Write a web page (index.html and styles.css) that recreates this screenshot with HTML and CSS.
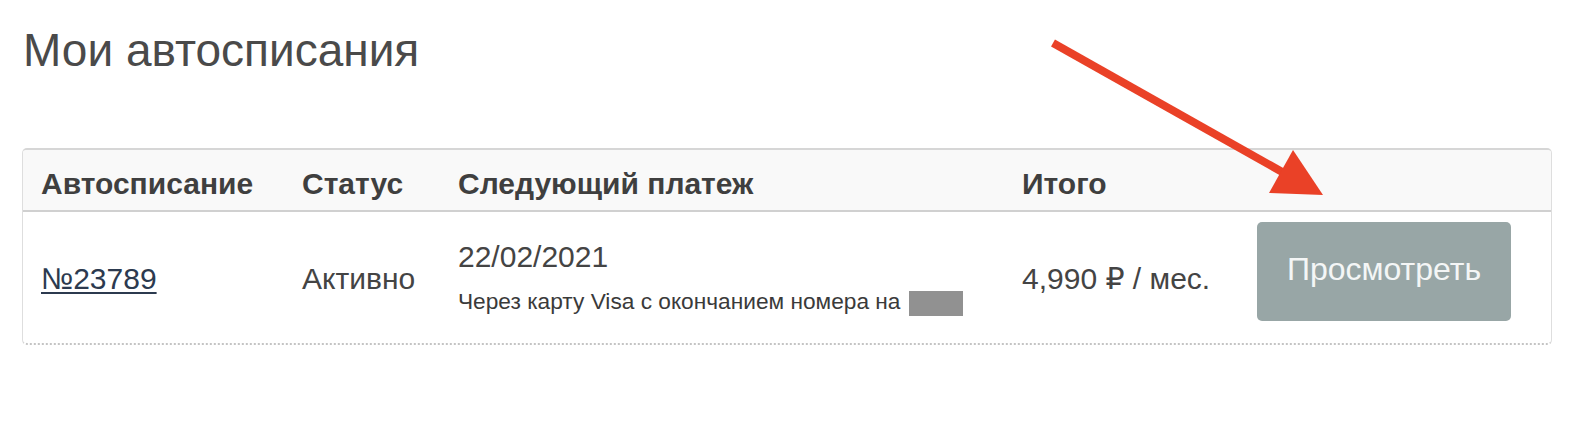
FILE: index.html
```html
<!DOCTYPE html>
<html lang="ru">
<head>
<meta charset="utf-8">
<title>Мои автосписания</title>
<link rel="stylesheet" href="styles.css">
</head>
<body>
<div class="page">
  <h1 class="title">Мои автосписания</h1>
  <div class="table">
    <div class="th">Автосписание</div>
    <div class="th">Статус</div>
    <div class="th">Следующий платеж</div>
    <div class="th">Итого</div>
    <div class="th"></div>

    <div class="td"><a class="link" href="#">№23789</a></div>
    <div class="td">Активно</div>
    <div class="td td-stack">
      <div class="date">22/02/2021</div>
      <div class="note">Через карту Visa с окончанием номера на <span class="mask"></span></div>
    </div>
    <div class="td">4,990 ₽ / мес.</div>
    <div class="td td-btn"><button class="btn">Просмотреть</button></div>
  </div>
  <svg class="arrow" width="1582" height="428" viewBox="0 0 1582 428" xmlns="http://www.w3.org/2000/svg">
    <line x1="1053" y1="43" x2="1284" y2="173" stroke="#ea4127" stroke-width="8"/>
    <polygon points="1293,150 1269,193 1323,195" fill="#ea4127"/>
  </svg>
</div>
</body>
</html>
```
FILE: styles.css
```css
* { box-sizing: border-box; }
html, body { margin: 0; padding: 0; background: #fff; }
body {
  font-family: "Liberation Sans", Arial, "DejaVu Sans", sans-serif;
  color: #444;
}
.page {
  position: relative;
  width: 1582px;
  height: 428px;
  padding: 27px 30px 0 22px;
}
.title {
  margin: 0 0 75px 1px;
  font-size: 46px;
  line-height: 46px;
  font-weight: normal;
  color: #4a4a4a;
}
.table {
  width: 1530px;
  display: grid;
  grid-template-columns: 261px 156px 564px 235px 1fr;
  border: 1px solid #dedede;
  border-top: 2px solid #d6d6d6;
  border-bottom: 2px dotted #c4c4c4;
  border-radius: 5px;
  overflow: hidden;
}
.th {
  background: #f9f9f9;
  height: 62px;
  padding: 8px 0 0 18px;
  line-height: 52px;
  font-size: 30px;
  font-weight: bold;
  color: #3f3f3f;
  border-bottom: 2px solid #d0d0d0;
  white-space: nowrap;
}
.td {
  height: 131px;
  padding: 2px 0 0 18px;
  display: flex;
  align-items: center;
  font-size: 30px;
  color: #444;
  white-space: nowrap;
}
.td-stack {
  flex-direction: column;
  align-items: flex-start;
  justify-content: center;
  padding-top: 0;
}
.date {
  font-size: 30px;
  line-height: 36px;
  margin-bottom: 12px;
}
.note {
  font-size: 22.7px;
  line-height: 28px;
  color: #3a3a3a;
}
.mask {
  display: inline-block;
  width: 54px;
  height: 25px;
  background: #919191;
  vertical-align: -7px;
  margin-left: 2px;
}
.link {
  color: #2c3a4f;
  text-decoration: underline;
  text-decoration-thickness: 2px;
  text-underline-offset: 3px;
}
.td-btn {
  align-items: flex-start;
  padding-top: 10px;
}
.btn {
  width: 254px;
  height: 99px;
  border: none;
  border-radius: 5px;
  background: #98a6a6;
  color: #f4f6f6;
  font-family: "Liberation Sans", Arial, sans-serif;
  font-size: 32px;
  padding: 0 0 4px;
}
.arrow {
  position: absolute;
  top: 0;
  left: 0;
  pointer-events: none;
}
```
